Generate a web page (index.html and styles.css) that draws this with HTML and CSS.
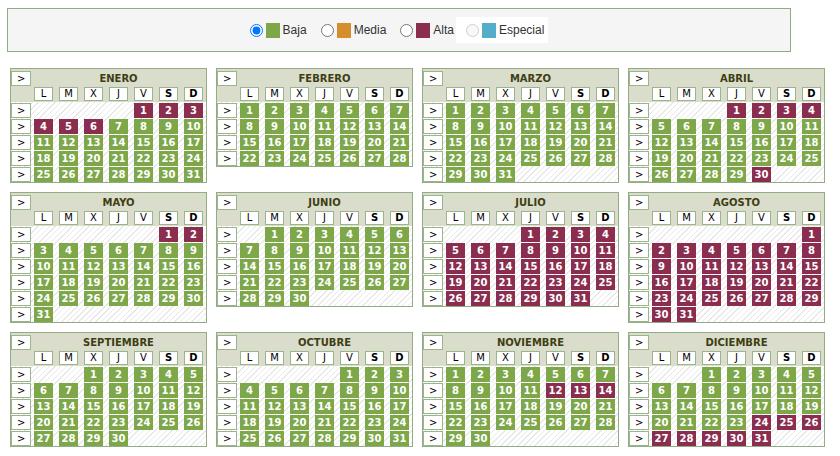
FILE: index.html
```html
<!DOCTYPE html>
<html lang="es">
<head>
    <meta charset="UTF-8">
    <title>Temporadas</title>
    <link rel="stylesheet" href="styles.css">
</head>
<body>
    <div class="legend">
        <label class="opt"><input type="radio" name="temp" checked><span class="sw baja"></span>Baja</label>
        <label class="opt"><input type="radio" name="temp"><span class="sw media"></span>Media</label>
        <label class="opt"><input type="radio" name="temp"><span class="sw alta"></span>Alta</label>
        <label class="opt off"><input type="radio" name="temp" disabled><span class="sw especial"></span>Especial</label>
    </div>

    <div class="months" id="months"></div>

    <script>
        // meses de 2021: desplazamiento del dia 1 (lunes = 0), dias, dias de temporada alta
        const meses = [
            { nombre: "ENERO", ini: 4, dias: 31, alta: [1, 2, 3, 4, 5, 6] },
            { nombre: "FEBRERO", ini: 0, dias: 28, alta: [] },
            { nombre: "MARZO", ini: 0, dias: 31, alta: [] },
            { nombre: "ABRIL", ini: 3, dias: 30, alta: [1, 2, 3, 4, 30] },
            { nombre: "MAYO", ini: 5, dias: 31, alta: [1, 2] },
            { nombre: "JUNIO", ini: 1, dias: 30, alta: [] },
            { nombre: "JULIO", ini: 3, dias: 31, alta: "todo" },
            { nombre: "AGOSTO", ini: 6, dias: 31, alta: "todo" },
            { nombre: "SEPTIEMBRE", ini: 2, dias: 30, alta: [] },
            { nombre: "OCTUBRE", ini: 4, dias: 31, alta: [] },
            { nombre: "NOVIEMBRE", ini: 0, dias: 30, alta: [12, 13, 14] },
            { nombre: "DICIEMBRE", ini: 2, dias: 31, alta: [24, 25, 26, 27, 28, 29, 30, 31] }
        ];
        const letras = ["L", "M", "X", "J", "V", "S", "D"];

        function pintarMes({ nombre, ini, dias, alta }) {
            let html = `<div class="cal"><div class="head">
                <div class="btn">&gt;</div><div class="title">${nombre}</div>
                <div></div>`;
            letras.forEach((l, i) => {
                html += `<div class="lt${i > 4 ? " fin" : ""}">${l}</div>`;
            });
            html += `</div><div class="body">`;
            const celdas = Math.ceil((ini + dias) / 7) * 7;
            for (let c = 0; c < celdas; c++) {
                if (c % 7 === 0) html += `<div class="btn">&gt;</div>`;
                const d = c - ini + 1;
                if (d < 1 || d > dias) {
                    html += `<div></div>`;
                } else {
                    const esAlta = alta === "todo" || alta.includes(d);
                    html += `<div class="day ${esAlta ? "alta" : "baja"}">${d}</div>`;
                }
            }
            html += `</div></div>`;
            return html;
        }

        document.getElementById("months").innerHTML = meses.map(pintarMes).join("");
    </script>
</body>
</html>
```

FILE: styles.css
```css
body {
    margin: 0;
    background-color: #fff;
    font-family: "Liberation Sans", Arial, sans-serif;
}

.legend {
    margin: 8px 0 0 7px;
    width: 782px;
    height: 42px;
    border: 1px solid #8fae80;
    background-color: #f5f5f5;
    display: flex;
    justify-content: center;
    align-items: center;
    gap: 14px;
    font-size: 12px;
    color: #333;
}

.opt {
    display: flex;
    align-items: center;
    gap: 3px;
}

.opt input {
    margin: 0;
    width: 13px;
    height: 13px;
}

.opt.off {
    background-color: #fff;
    padding: 5px 4px 5px 10px;
    margin-left: -12px;
}

.sw {
    display: inline-block;
    width: 14px;
    height: 15px;
    margin-top: 1px;
}

.baja { background-color: #7ea74a; }
.media { background-color: #d68d2e; }
.alta { background-color: #8a2d4f; }
.especial { background-color: #54adc9; }

.months {
    display: grid;
    grid-template-columns: repeat(4, 197px);
    column-gap: 9px;
    row-gap: 9px;
    align-items: start;
    margin: 16px 0 0 10px;
    font-family: "DejaVu Sans", Verdana, sans-serif;
    font-size: 10px;
}

.cal {
    border: 1px solid #93ac84;
}

.head, .body {
    display: grid;
    grid-template-columns: 20px repeat(7, 25px);
}

.head {
    grid-template-rows: 17px 16px;
    background-color: #dadccc;
}

.body {
    grid-auto-rows: 16px;
    background: repeating-linear-gradient(135deg, #fff 0, #fff 3px, #e8e8e8 3px, #e8e8e8 4px);
}

.btn {
    box-sizing: border-box;
    height: 15px;
    margin-top: 1px;
    border: 1px solid #9bb48c;
    background-color: #fff;
    color: #000;
    line-height: 13px;
    padding-left: 5px;
}

.head .btn {
    margin-top: 2px;
}

.title {
    grid-column: span 7;
    text-align: center;
    font-weight: bold;
    color: #3d3f12;
    line-height: 19px;
}

.lt {
    box-sizing: border-box;
    height: 14px;
    margin: 1px 3px;
    border: 1px solid #9bb48c;
    background-color: #fff;
    color: #000;
    text-align: center;
    line-height: 12px;
}

.lt.fin {
    font-weight: bold;
}

.day {
    height: 15px;
    margin: 1px 3px 0;
    color: #fff;
    font-weight: bold;
    text-align: center;
    line-height: 15px;
}
```
